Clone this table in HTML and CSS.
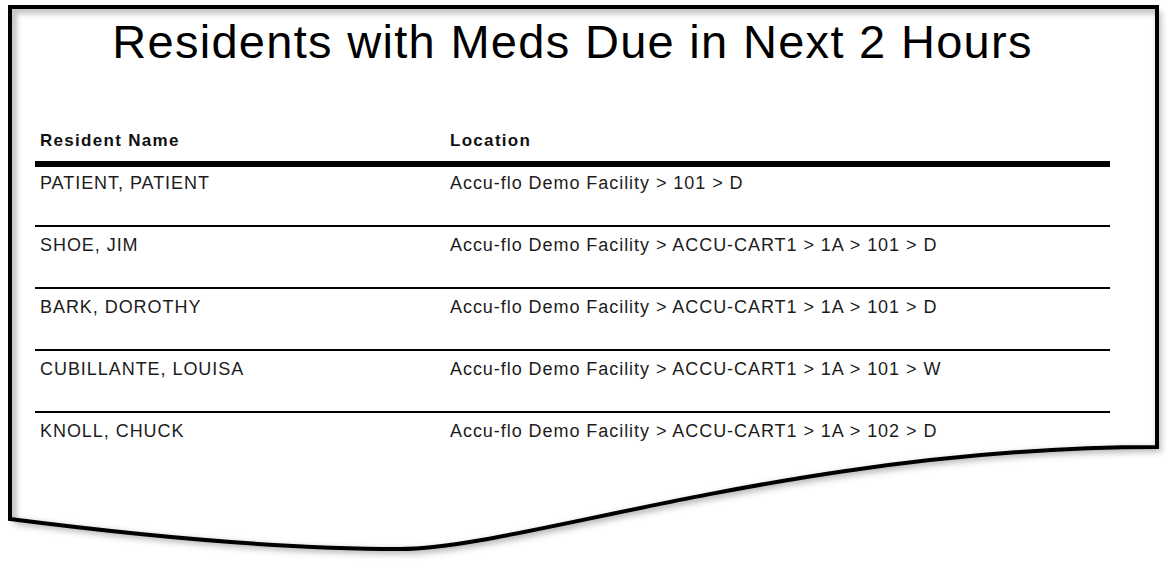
FILE: index.html
```html
<!DOCTYPE html>
<html>
<head>
<meta charset="utf-8">
<title>Residents with Meds Due in Next 2 Hours</title>
<link rel="stylesheet" href="styles.css">
</head>
<body>
<div class="sheet">
  <svg class="paper" width="1175" height="573" viewBox="0 0 1175 573" xmlns="http://www.w3.org/2000/svg">
    <defs>
      <clipPath id="inside">
        <path d="M10,7 H1157 V447 C800,447 520,549 400,549 C280,549 150,537 10,519 Z"/>
      </clipPath>
      <filter id="drop" x="-5%" y="-5%" width="115%" height="120%">
        <feDropShadow dx="4" dy="5" stdDeviation="3" flood-color="#000" flood-opacity="0.28"/>
      </filter>
      <filter id="soft">
        <feGaussianBlur stdDeviation="2.5"/>
      </filter>
    </defs>
    <path d="M10,7 H1157 V447 C800,447 520,549 400,549 C280,549 150,537 10,519 Z" fill="#fff" filter="url(#drop)"/>
    <g clip-path="url(#inside)">
      <path d="M10,7 H1157 V447 C800,447 520,549 400,549 C280,549 150,537 10,519 Z" fill="none" stroke="#c4c4c4" stroke-width="8" filter="url(#soft)" transform="translate(3,3)"/>
    </g>
    <path d="M10,7 H1157 V447 C800,447 520,549 400,549 C280,549 150,537 10,519 Z" fill="none" stroke="#000" stroke-width="4" stroke-linejoin="miter"/>
  </svg>
  <div class="content">
    <h1 class="title">Residents with Meds Due in Next 2 Hours</h1>
    <div class="table">
      <div class="row head">
        <div class="cell name">Resident Name</div>
        <div class="cell loc">Location</div>
      </div>
      <div class="row first">
        <div class="cell name">PATIENT, PATIENT</div>
        <div class="cell loc">Accu-flo Demo Facility &gt; 101 &gt; D</div>
      </div>
      <div class="row">
        <div class="cell name">SHOE, JIM</div>
        <div class="cell loc">Accu-flo Demo Facility &gt; ACCU-CART1 &gt; 1A &gt; 101 &gt; D</div>
      </div>
      <div class="row">
        <div class="cell name">BARK, DOROTHY</div>
        <div class="cell loc">Accu-flo Demo Facility &gt; ACCU-CART1 &gt; 1A &gt; 101 &gt; D</div>
      </div>
      <div class="row">
        <div class="cell name">CUBILLANTE, LOUISA</div>
        <div class="cell loc">Accu-flo Demo Facility &gt; ACCU-CART1 &gt; 1A &gt; 101 &gt; W</div>
      </div>
      <div class="row last">
        <div class="cell name">KNOLL, CHUCK</div>
        <div class="cell loc">Accu-flo Demo Facility &gt; ACCU-CART1 &gt; 1A &gt; 102 &gt; D</div>
      </div>
    </div>
  </div>
</div>
</body>
</html>
```
FILE: styles.css
```css
html, body {
  margin: 0;
  padding: 0;
  background: #fff;
}
body {
  font-family: "Liberation Sans", Arial, sans-serif;
  color: #1c1c1c;
}
.sheet {
  position: relative;
  width: 1175px;
  height: 573px;
  overflow: hidden;
}
.paper {
  position: absolute;
  left: 0;
  top: 0;
}
.content {
  position: relative;
  width: 1075px;
  margin-left: 35px;
  padding-top: 18px;
}
.title {
  margin: 0;
  font-size: 47px;
  line-height: 47px;
  letter-spacing: 1.3px;
  font-weight: normal;
  text-align: center;
  color: #000;
}
.table {
  margin-top: 67px;
  display: flex;
  flex-direction: column;
}
.row {
  display: flex;
  font-size: 18px;
  line-height: 18px;
  letter-spacing: 0.95px;
  height: 62px;
  box-sizing: border-box;
  padding-top: 9px;
  border-bottom: 2px solid #000;
}
.row.head {
  height: auto;
  padding-top: 0;
  padding-bottom: 11px;
  border-bottom: 6px solid #000;
  font-size: 17px;
  font-weight: bold;
  letter-spacing: 1.3px;
  color: #111;
}
.row.first {
  height: 60px;
  padding-top: 7px;
}
.row.last {
  border-bottom: none;
}
.cell.name {
  width: 410px;
  padding-left: 5px;
}
.cell.loc {
  flex: 1;
}
```
